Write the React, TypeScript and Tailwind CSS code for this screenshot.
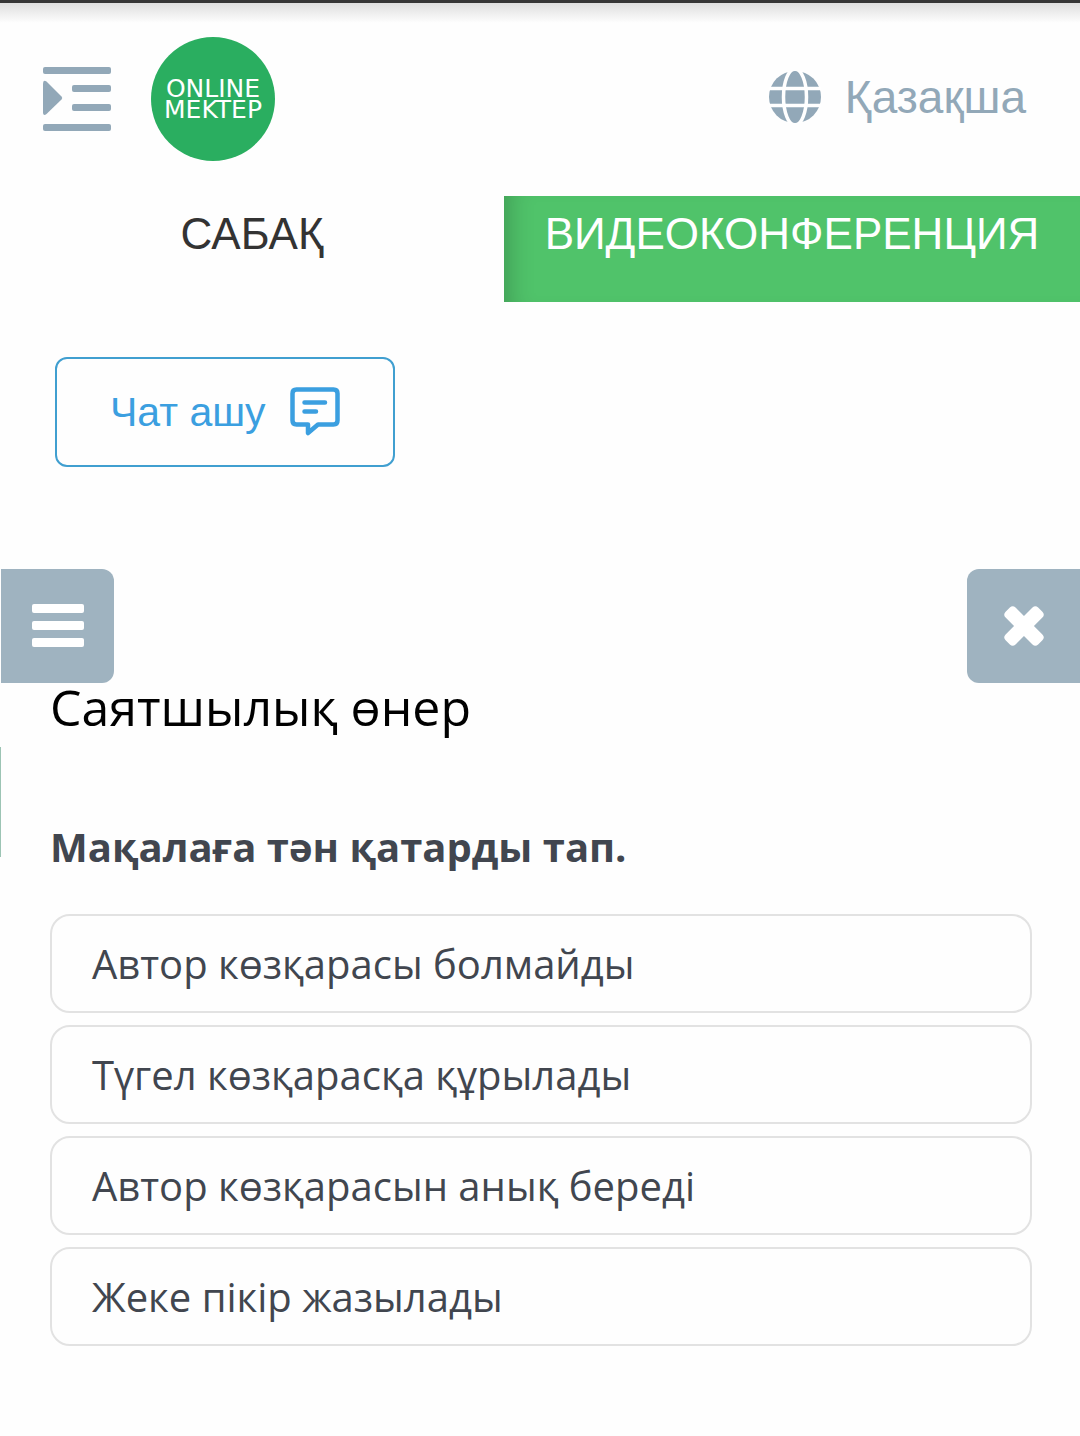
import { useState } from 'react';
import clsx from 'clsx';

const answers = [
    'Автор көзқарасы болмайды',
    'Түгел көзқарасқа құрылады',
    'Автор көзқарасын анық береді',
    'Жеке пікір жазылады',
];

function IndentIcon() {
    return (
        <svg width="68" height="64" viewBox="0 0 68 64" fill="currentColor" aria-hidden="true">
            <rect x="0" y="0" width="68" height="7" rx="2" />
            <rect x="29" y="18" width="39" height="7" rx="2" />
            <rect x="29" y="37" width="39" height="7" rx="2" />
            <rect x="0" y="57" width="68" height="7" rx="2" />
            <path d="M0 16.500Q0 12.500 3.500 14.500L18.500 29.500Q20 31 18.500 32.500L3.500 47Q0 49.500 0 45.500Z" />
        </svg>
    );
}

function GlobeIcon() {
    return (
        <svg width="52" height="52" viewBox="0 0 52 52" aria-hidden="true">
            <circle cx="26" cy="26" r="26" fill="currentColor" />
            <g fill="none" stroke="#fff" strokeWidth="3.500">
                <ellipse cx="26" cy="26" rx="11.500" ry="28" />
                <path d="M-1 17.500H53M-1 34.500H53" />
            </g>
        </svg>
    );
}

function ChatIcon() {
    return (
        <svg width="50" height="50" viewBox="0 0 50 50" fill="none" stroke="currentColor" strokeWidth="4.500" strokeLinejoin="round" strokeLinecap="round" aria-hidden="true">
            <path d="M6.500 2.500H43.500Q47.500 2.500 47.500 6.500V33.500Q47.500 37.500 43.500 37.500H28L18 46V37.500H6.500Q2.500 37.500 2.500 33.500V6.500Q2.500 2.500 6.500 2.500Z" />
            <path d="M14.500 15.500H35M14.500 24.500H26" />
        </svg>
    );
}

function BarsIcon() {
    return (
        <svg width="52" height="44" viewBox="0 0 52 44" fill="currentColor" aria-hidden="true">
            <rect y="0" width="52" height="9" rx="2" />
            <rect y="17" width="52" height="9" rx="2" />
            <rect y="34" width="52" height="9" rx="2" />
        </svg>
    );
}

function CloseIcon() {
    return (
        <svg width="42" height="42" viewBox="0 0 42 42" fill="currentColor" aria-hidden="true">
            <rect x="-2" y="14" width="46" height="14" rx="4" transform="rotate(45 21 21)" />
            <rect x="-2" y="14" width="46" height="14" rx="4" transform="rotate(-45 21 21)" />
        </svg>
    );
}

function Header() {
    return (
        <header className="border-t-3 border-[#363636]">
            <div className="h-5 bg-linear-to-b from-[#dedede] to-[#fefefe]" />
            <div className="flex items-center pt-3.5 pr-[54px] pb-[35px] pl-[43px] text-[#92a8b8]">
                <button type="button" aria-label="Мәзір">
                    <IndentIcon />
                </button>
                <a href="#" className="ml-10 flex size-31 items-center justify-center rounded-full bg-[#2aae60] text-center font-['DejaVu_Sans',sans-serif] text-[25px] leading-[21px] text-white">
                    ONLINE MEKTEP
                </a>
                <button type="button" className="ml-auto flex items-center gap-6 pb-1 text-[46px] leading-[48px]">
                    <GlobeIcon />
                    Қазақша
                </button>
            </div>
        </header>
    );
}

export default function App() {
    const [selected, setSelected] = useState<number | null>(null);

    return (
        <div className="min-h-screen bg-[#fefefe] font-['Liberation_Sans',Arial,sans-serif]">
            <Header />

            <nav className="grid grid-cols-[7fr_8fr] text-[44px] leading-[48px]">
                <button type="button" className="pt-3.5 pb-11 text-[#333]">САБАҚ</button>
                <button type="button" className="bg-[#50c36a] pt-3.5 pb-11 text-white shadow-[inset_24px_0_24px_-18px_rgba(0,0,0,0.2)]">
                    ВИДЕОКОНФЕРЕНЦИЯ
                </button>
            </nav>

            <div className="px-[55px] pt-[55px]">
                <button type="button" className="flex h-[110px] items-center gap-6 rounded-xl border-2 border-[#409fd0] px-[53px] text-[41px] leading-[48px] text-[#3b9fe0]">
                    Чат ашу
                    <ChatIcon />
                </button>
            </div>

            <main className="relative mt-[102px] font-['Open_Sans','Noto_Sans',sans-serif]">
                <div className="flex justify-between pl-px text-white">
                    <button type="button" aria-label="Тізім" className="flex h-[114px] w-[113px] items-center justify-center rounded-r-xl bg-[#9fb3c0]">
                        <BarsIcon />
                    </button>
                    <button type="button" aria-label="Жабу" className="flex h-[114px] w-[113px] items-center justify-center rounded-l-xl bg-[#9fb3c0]">
                        <CloseIcon />
                    </button>
                </div>
                {/* edge of the collapsed side panel */}
                <div className="absolute top-[178px] left-0 h-[110px] w-px bg-[#9cc4b4]" />

                <div className="pr-12 pl-[50px]">
                    <h1 className="text-[50px] leading-[48px] text-black">Саятшылық өнер</h1>
                    <h2 className="mt-[90px] text-[40px] leading-[52px] font-bold text-[#41464f]">Мақалаға тән қатарды тап.</h2>
                    <div className="mt-[41px] flex flex-col gap-3">
                        {answers.map((answer, i) => (
                            <button
                                key={answer}
                                type="button"
                                onClick={() => setSelected(i)}
                                className={clsx(
                                    'h-[99px] rounded-[20px] border-2 px-10 text-left text-[40px] leading-[52px] text-[#41464f]',
                                    selected === i ? 'border-[#409fd0]' : 'border-[#e2e2e2]',
                                )}
                            >
                                {answer}
                            </button>
                        ))}
                    </div>
                </div>
            </main>
        </div>
    );
}
